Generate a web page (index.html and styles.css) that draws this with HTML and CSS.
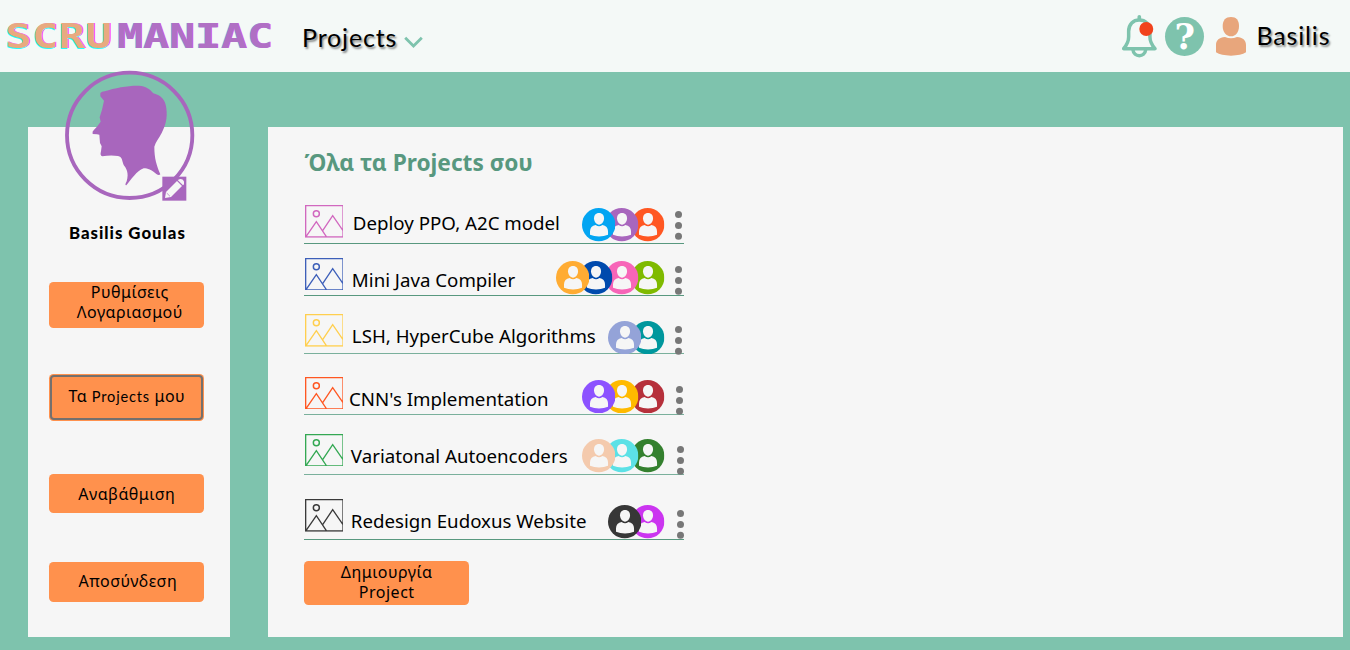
FILE: index.html
```html
<!DOCTYPE html>
<html lang="el">
<head>
<meta charset="utf-8">
<title>Scrumaniac</title>
<link rel="stylesheet" href="styles.css">
</head>
<body>
<svg width="0" height="0" class="defs">
  <symbol id="picture" viewBox="0 0 116 98">
    <path d="M2 2H114V96H2ZM3 95L34 50L65 96M53 77L83 32L114 77" fill="none" stroke="currentColor" stroke-width="4"/>
    <circle cx="34" cy="26" r="9" fill="none" stroke="currentColor" stroke-width="4.4"/>
  </symbol>
  <symbol id="person" viewBox="0 0 100 100">
    <circle cx="50" cy="50" r="50" fill="currentColor"/>
    <path d="M51 15C61 15 66 22 66 31C66 42 59 50 51 50C43 50 36 42 36 31C36 22 41 15 51 15Z" fill="#f6f6f6"/>
    <path d="M24 80V70C24 59 30 53 41 51Q51 58 61 51C72 53 78 59 78 70V80Q66 85 51 85Q36 85 24 80Z" fill="#f6f6f6"/>
  </symbol>
  <symbol id="dots" viewBox="0 0 7 29">
    <circle cx="3.5" cy="3.5" r="3.5"/><circle cx="3.5" cy="14.4" r="3.5"/><circle cx="3.5" cy="25.3" r="3.5"/>
  </symbol>
</svg>
<header class="topbar">
  <svg class="logo" viewBox="0 0 272 40">
    <text class="logo-scru" x="5" y="33" textLength="107" lengthAdjust="spacingAndGlyphs">SCRU</text>
    <text class="logo-maniac" x="117" y="33" textLength="156" lengthAdjust="spacingAndGlyphs">MANIAC</text>
  </svg>
  <div class="nav-title">Projects</div>
  <svg class="chevron" viewBox="0 0 19 13"><path d="M1.2 1.7L9.5 10L17.8 1.7" fill="none" stroke="#7ec3ad" stroke-width="2.8"/></svg>
  <svg class="bell" viewBox="35 42 104 132">
    <path d="M87 50V58" stroke="#7ec3ad" stroke-width="11" stroke-linecap="round"/>
    <path d="M40 146C50 134 55 125 55 111V94C55 72 69 60 87 60C105 60 119 72 119 94V111C119 125 124 134 134 146Z" fill="none" stroke="#7ec3ad" stroke-width="10.5" stroke-linejoin="round"/>
    <path d="M68 150C70 173 104 173 106 150" fill="none" stroke="#7ec3ad" stroke-width="10.5"/>
    <circle cx="108" cy="87" r="21" fill="#f1431c"/>
  </svg>
  <div class="help">?</div>
  <svg class="user" viewBox="0 0 90 117">
    <path d="M45 0C61 0 69 10 69 27C69 45 59 58 45 58C31 58 20 45 20 27C20 10 29 0 45 0Z" fill="#e8a67c"/>
    <path d="M0 106V84C0 70 10 61 27 60Q45 68 63 60C80 61 90 70 90 84V106Q75 116 45 116Q15 116 0 106Z" fill="#e8a67c"/>
  </svg>
  <div class="user-name">Basilis</div>
</header>
<main class="page">
  <aside class="sidebar">
    <svg class="portrait" viewBox="44 16 390 393">
      <circle cx="238" cy="212" r="188" fill="none" stroke="#a866bd" stroke-width="11.5"/>
      <path d="M150 85Q154 80 163 80C195 69 236 62 266 63C286 64 300 74 309 86C333 92 346 107 348 131C352 163 345 183 334 205C326 221 316 231 312 246C312 282 319 302 330 329Q326 334 318 328C303 315 293 311 280 311C258 319 243 345 228 362Q222 363 229 350C237 324 227 310 220 301C214 285 216 277 203 274Q181 270 156 275Q148 273 152 260L154 245L149 235L147 210Q143 208 127 208Q125 201 130 197L141 185L151 171L148 158L155 135L161 108L150 95Z" fill="#a866bd"/>
      <path d="M336 336H408V408H336Z" fill="#a866bd"/>
      <path d="M344 400L347 382L380 349L395 364L362 397Z" fill="#f6f6f6"/>
      <path d="M384 345Q395 340 401 350V359L398 362L382 346Z" fill="#f6f6f6"/>
      <path d="M349 385L359 395" stroke="#a866bd" stroke-width="2"/>
    </svg>
    <h2 class="full-name">Basilis Goulas</h2>
    <nav class="menu">
      <button class="btn btn-settings">Ρυθμίσεις<br>Λογαριασμού</button>
      <button class="btn btn-projects"><span class="ring">Τα <span class="geo">Projects</span> μου</span></button>
      <button class="btn btn-upgrade">Αναβάθμιση</button>
      <button class="btn btn-logout">Αποσύνδεση</button>
    </nav>
  </aside>
  <section class="content">
    <h1 class="heading">Όλα τα Projects σου</h1>
    <div class="row r1">
      <svg class="pic"><use href="#picture"/></svg><span class="name">Deploy PPO, A2C model</span>
      <div class="people"><svg class="c-sky"><use href="#person"/></svg><svg class="c-purple"><use href="#person"/></svg><svg class="c-orange"><use href="#person"/></svg></div>
      <svg class="more"><use href="#dots"/></svg>
    </div>
    <div class="row r2">
      <svg class="pic"><use href="#picture"/></svg><span class="name">Mini Java Compiler</span>
      <div class="people"><svg class="c-amber"><use href="#person"/></svg><svg class="c-navy"><use href="#person"/></svg><svg class="c-pink"><use href="#person"/></svg><svg class="c-lime"><use href="#person"/></svg></div>
      <svg class="more"><use href="#dots"/></svg>
    </div>
    <div class="row r3">
      <svg class="pic"><use href="#picture"/></svg><span class="name">LSH, HyperCube Algorithms</span>
      <div class="people"><svg class="c-lavender"><use href="#person"/></svg><svg class="c-teal"><use href="#person"/></svg></div>
      <svg class="more"><use href="#dots"/></svg>
    </div>
    <div class="row r4">
      <svg class="pic"><use href="#picture"/></svg><span class="name">CNN's Implementation</span>
      <div class="people"><svg class="c-violet"><use href="#person"/></svg><svg class="c-yellow"><use href="#person"/></svg><svg class="c-red"><use href="#person"/></svg></div>
      <svg class="more"><use href="#dots"/></svg>
    </div>
    <div class="row r5">
      <svg class="pic"><use href="#picture"/></svg><span class="name">Variatonal Autoencoders</span>
      <div class="people"><svg class="c-peach"><use href="#person"/></svg><svg class="c-cyan"><use href="#person"/></svg><svg class="c-green"><use href="#person"/></svg></div>
      <svg class="more"><use href="#dots"/></svg>
    </div>
    <div class="row r6">
      <svg class="pic"><use href="#picture"/></svg><span class="name">Redesign Eudoxus Website</span>
      <div class="people"><svg class="c-black"><use href="#person"/></svg><svg class="c-magenta"><use href="#person"/></svg></div>
      <svg class="more"><use href="#dots"/></svg>
    </div>
    <button class="btn btn-create">Δημιουργία<br>Project</button>
  </section>
</main>
</body>
</html>
```

FILE: styles.css
```css
* { box-sizing: border-box; }
body { margin: 0; width: 1350px; height: 650px; overflow: hidden; background: #7ec3ad; color: #000; font-family: "Noto Sans", sans-serif; }
svg { display: block; flex: none; }
.defs { position: absolute; }

.topbar { display: flex; align-items: flex-start; height: 72.3px; background: #f4f9f7; }
.logo { width: 272px; height: 40px; margin-top: 15px; overflow: visible; }
.logo text { font: 700 33px "DejaVu Sans Mono", monospace; }
.logo-scru { fill: #e8aa80; text-shadow: -.6px 1px 0 #2ff, .7px 0 0 #f4f; }
.logo-maniac { fill: #b070c4; text-shadow: .6px 0 0 #e45be8, -.6px 0 0 #8cdcf0; }
.nav-title, .user-name { font: 400 25px/30px Lato, sans-serif; letter-spacing: .85px; text-shadow: 1.5px 1.5px 2px rgba(0,0,0,.45); white-space: nowrap; }
.nav-title { width: 102px; margin: 21.5px 0 0 30px; }
.chevron { width: 19px; height: 13px; margin-top: 36px; }
.bell { width: 34.6px; height: 44px; margin: 14px 0 0 auto; }
.help { width: 39.3px; height: 39.3px; margin: 17px 0 0 8.3px; border-radius: 50%; background: #7ec3ad; color: #fff; text-align: center; font: 700 35px/40.5px "DejaVu Serif", serif; }
.user { width: 30px; height: 39px; margin: 17px 0 0 11.7px; }
.user-name { width: 93.5px; margin: 20px 0 0 10.5px; }

.page { display: flex; align-items: flex-start; gap: 37.5px; padding: 55px 0 0 28.3px; }
.sidebar, .content { background: #f6f6f6; height: 509.9px; }
.sidebar { width: 202.2px; display: flex; flex-direction: column; }
.portrait { width: 130px; height: 131px; margin: -57px 0 0 36.4px; }
.full-name { margin: 22px 0 0; height: 20px; text-align: center; font: 900 16.8px/20px Lato, sans-serif; letter-spacing: 1px; padding-right: 4px; }
.menu { padding: 38.7px 0 0 21px; }
.btn { display: flex; justify-content: center; align-items: flex-start; width: 155px; padding: 0; border: 0; border-radius: 4.5px; background: #ff914d; color: #000; font: 400 16px/20px "Noto Sans", sans-serif; letter-spacing: .5px; text-align: center; white-space: nowrap; }
.btn-settings { display: block; height: 46px; padding: 0 0 6.5px 6px; }
.btn-projects { height: 47.5px; margin-top: 45.7px; padding: 1px; }
.ring { display: block; width: 100%; height: 100%; border: 2px solid #75706d; border-radius: 4px; padding-top: 9.5px; }
.geo { font-family: Lato, sans-serif; font-size: 14.6px; letter-spacing: .8px; }
.btn-upgrade { height: 39.3px; margin-top: 53px; padding-top: 10px; }
.btn-logout { height: 39.3px; margin-top: 49px; padding: 8.5px 0 0 2px; }

.content { width: 1075px; padding: 20px 0 0 36.4px; }
.heading { margin: 0 0 21px; height: 32px; font: 700 22.7px/32px "Noto Sans", sans-serif; color: #58987f; }
.row { display: flex; align-items: flex-start; width: 380px; height: var(--h); border-bottom: 1.3px solid #58987f; }
.pic { width: 38.7px; height: 32.7px; margin: var(--pic) -.3px 0 .3px; color: var(--tint); }
.name { margin: var(--text) 0 0 var(--indent); font-size: 18.7px; line-height: 26px; white-space: nowrap; }
.people { display: flex; isolation: isolate; margin: var(--people) 0 0 auto; }
.people svg { width: 33.4px; height: 33.4px; margin-left: -7.4px; position: relative; }
.people svg:nth-child(1) { z-index: 4; margin-left: 0; }
.people svg:nth-child(2) { z-index: 3; margin-left: -10.2px; }
.people svg:nth-child(3) { z-index: 2; }
.more { width: 7px; height: 29px; margin: var(--dots) var(--edge) -5px 10.5px; fill: #777; position: relative; overflow: visible; }

.r1 { --h: 43.5px; --pic: 5px; --text: 9.5px; --indent: 9.8px; --people: 8px; --dots: 10.5px; --edge: 2.2px; --tint: #d168bf; }
.r2 { --h: 52px; --pic: 14px; --text: 23px; --indent: 8.8px; --people: 17.5px; --dots: 22px; --edge: 2.2px; --tint: #3d5fb9; }
.r3 { --h: 58px; --pic: 18.5px; --text: 27px; --indent: 8.8px; --people: 25.2px; --dots: 30px; --edge: 2.2px; --tint: #ffcf4f; }
.r4 { --h: 61px; --pic: 23px; --text: 32.5px; --indent: 6px; --people: 26px; --dots: 32px; --edge: 1.5px; --tint: #ff5722; }
.r5 { --h: 60px; --pic: 19px; --text: 28.5px; --indent: 7.8px; --people: 24.6px; --dots: 31px; --edge: .8px; --tint: #34a853; }
.r6 { --h: 65.5px; --pic: 24.5px; --text: 33.5px; --indent: 7.8px; --people: 30.7px; --dots: 35.5px; --edge: .8px; --tint: #3a3a3a; }
.r4, .r5, .r3 { border-bottom-color: #7ab09c; }
.r4 .more { margin-left: 11.2px; }
.r5 .more, .r6 .more { margin-left: 11.9px; }

.c-sky { color: #03a5f2; } .c-purple { color: #a866bd; } .c-orange { color: #ff5722; }
.c-amber { color: #ffac33; } .c-navy { color: #004aad; } .c-pink { color: #f765b8; } .c-lime { color: #7fba00; }
.c-lavender { color: #94a3d8; } .c-teal { color: #00979d; }
.c-violet { color: #8c52ff; } .c-yellow { color: #ffba00; } .c-red { color: #b6303b; }
.c-peach { color: #f4caad; } .c-cyan { color: #5ce1e6; } .c-green { color: #34802e; }
.c-black { color: #373737; } .c-magenta { color: #cb35f0; }

.btn-create { display: block; width: 164.7px; height: 44px; margin-top: 20.5px; padding-bottom: 2px; }
```
